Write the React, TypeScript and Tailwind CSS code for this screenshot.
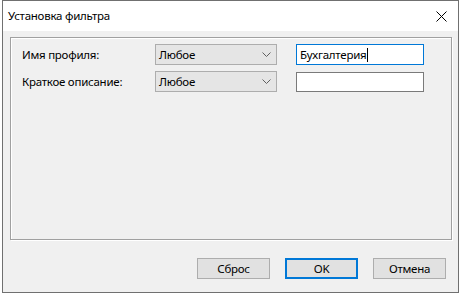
import React from 'react';

const font = { fontFamily: '"Noto Sans", "Liberation Sans", sans-serif' };

const Chevron: React.FC = () => (
  <svg width="9" height="5" viewBox="0 0 9 5" className="mr-[5px]">
    <path d="M0.5 0.5 L4.5 4.5 L8.5 0.5" fill="none" stroke="#606060" strokeWidth="1" />
  </svg>
);

const Combo: React.FC<{ value: string }> = ({ value }) => (
  <div className="flex h-[21px] w-[122px] items-center justify-between border border-[#adadad] bg-[#e5e5e5] pl-[3px] text-black">
    <span>{value}</span>
    <Chevron />
  </div>
);

export default function App() {
  return (
    <div className="h-[295px] w-[461px] bg-white pl-[2px] text-[11.5px] tracking-[-0.25px]" style={font}>
      <div className="flex h-[293px] w-[457px] flex-col border border-[#707070]">
        <div className="flex h-[30px] items-center justify-between bg-white pl-[5px] pr-[11px]">
          <span className="text-black">Установка фильтра</span>
          <svg width="11" height="11" viewBox="0 0 11 11">
            <path d="M0.5 0.5 L10.5 10.5 M10.5 0.5 L0.5 10.5" stroke="#000" strokeWidth="1" />
          </svg>
        </div>
        <div className="flex flex-1 flex-col bg-[#f0f0f0] pl-[7px] pr-[4px] pt-[6px]">
          <div className="flex h-[203px] w-[442px] flex-col gap-[6px] border border-[#a0a0a0] pl-[11px] pt-[6px] shadow-[inset_1px_1px_0_#fff,1px_1px_0_#fff]">
            <div className="flex items-center">
              <span className="w-[133px] text-black">Имя профиля:</span>
              <Combo value="Любое" />
              <div className="ml-[19px] flex h-[21px] w-[128px] items-center border border-[#0078d7] bg-white pl-[3px] text-black">
                Бухгалтерия
                <span className="ml-[1px] h-[14px] w-px bg-black" />
              </div>
            </div>
            <div className="flex items-center">
              <span className="w-[133px] text-black">Краткое описание:</span>
              <Combo value="Любое" />
              <div className="ml-[19px] h-[20px] w-[128px] border border-[#7a7a7a] bg-white" />
            </div>
          </div>
          <div className="mt-[18px] flex justify-end gap-[15px] pr-[8px]">
            <button className="flex h-[21px] w-[73px] items-center justify-center border border-[#adadad] bg-[#e1e1e1] text-black">
              Сброс
            </button>
            <button className="flex h-[21px] w-[73px] items-center justify-center border-2 border-[#0078d7] bg-[#e1e1e1] text-black">
              OK
            </button>
            <button className="flex h-[21px] w-[73px] items-center justify-center border border-[#adadad] bg-[#e1e1e1] text-black">
              Отмена
            </button>
          </div>
        </div>
      </div>
    </div>
  );
}
